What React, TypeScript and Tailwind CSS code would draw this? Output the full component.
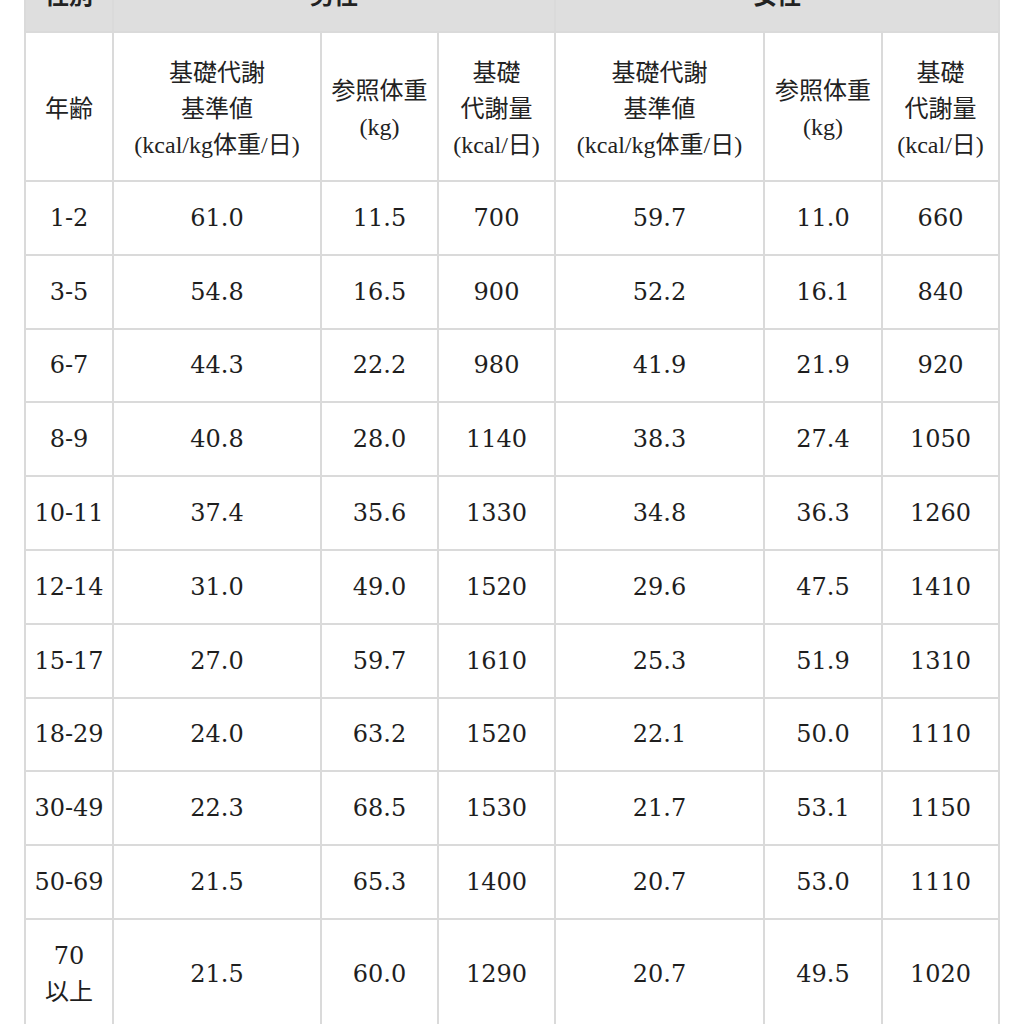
const rows: string[][] = [
  ["1-2", "61.0", "11.5", "700", "59.7", "11.0", "660"],
  ["3-5", "54.8", "16.5", "900", "52.2", "16.1", "840"],
  ["6-7", "44.3", "22.2", "980", "41.9", "21.9", "920"],
  ["8-9", "40.8", "28.0", "1140", "38.3", "27.4", "1050"],
  ["10-11", "37.4", "35.6", "1330", "34.8", "36.3", "1260"],
  ["12-14", "31.0", "49.0", "1520", "29.6", "47.5", "1410"],
  ["15-17", "27.0", "59.7", "1610", "25.3", "51.9", "1310"],
  ["18-29", "24.0", "63.2", "1520", "22.1", "50.0", "1110"],
  ["30-49", "22.3", "68.5", "1530", "21.7", "53.1", "1150"],
  ["50-69", "21.5", "65.3", "1400", "20.7", "53.0", "1110"],
];

const cell = "border-2 border-[#dadada] text-center align-middle px-1";
const head = `${cell} pt-[4px]`;
const num = "font-['DejaVu_Serif','Noto_Sans_CJK_JP',serif] text-[#1e1e1e]";

function SubHeads() {
  return (
    <>
      <td className={head}>
        基礎代謝
        <br />
        基準値
        <br />
        (kcal/kg体重/日)
      </td>
      <td className={head}>
        参照体重
        <br />
        (kg)
      </td>
      <td className={head}>
        基礎
        <br />
        代謝量
        <br />
        (kcal/日)
      </td>
    </>
  );
}

export default function App() {
  return (
    <div className="min-h-screen bg-white overflow-hidden">
      <div className="pl-6 pr-[25px] -mt-[45px]">
        <table className="w-full table-fixed border-collapse text-[24px] leading-[36px] text-[#222] font-['Liberation_Serif','Noto_Sans_CJK_JP',serif]">
          <colgroup>
            <col className="w-[88px]" />
            <col className="w-[208px]" />
            <col className="w-[117px]" />
            <col className="w-[117px]" />
            <col className="w-[209px]" />
            <col className="w-[118px]" />
            <col className="w-[117px]" />
          </colgroup>
          <thead>
            <tr className="h-[76px] bg-[#dedede] font-['Noto_Sans_CJK_JP',sans-serif] font-bold">
              <th className={cell}>性別</th>
              <th className={cell} colSpan={3}>
                男性
              </th>
              <th className={cell} colSpan={3}>
                女性
              </th>
            </tr>
          </thead>
          <tbody>
            <tr className="h-[149px]">
              <td className={head}>年齢</td>
              <SubHeads />
              <SubHeads />
            </tr>
            {rows.map((r) => (
              <tr key={r[0]} className="h-[73.8px]">
                {r.map((v, i) => (
                  <td key={i} className={`${cell} ${num}`}>
                    {v}
                  </td>
                ))}
              </tr>
            ))}
            <tr className="h-[110px]">
              <td className={`${cell} ${num}`}>
                70
                <br />
                以上
              </td>
              {["21.5", "60.0", "1290", "20.7", "49.5", "1020"].map((v, i) => (
                <td key={i} className={`${cell} ${num}`}>
                  {v}
                </td>
              ))}
            </tr>
          </tbody>
        </table>
      </div>
    </div>
  );
}
